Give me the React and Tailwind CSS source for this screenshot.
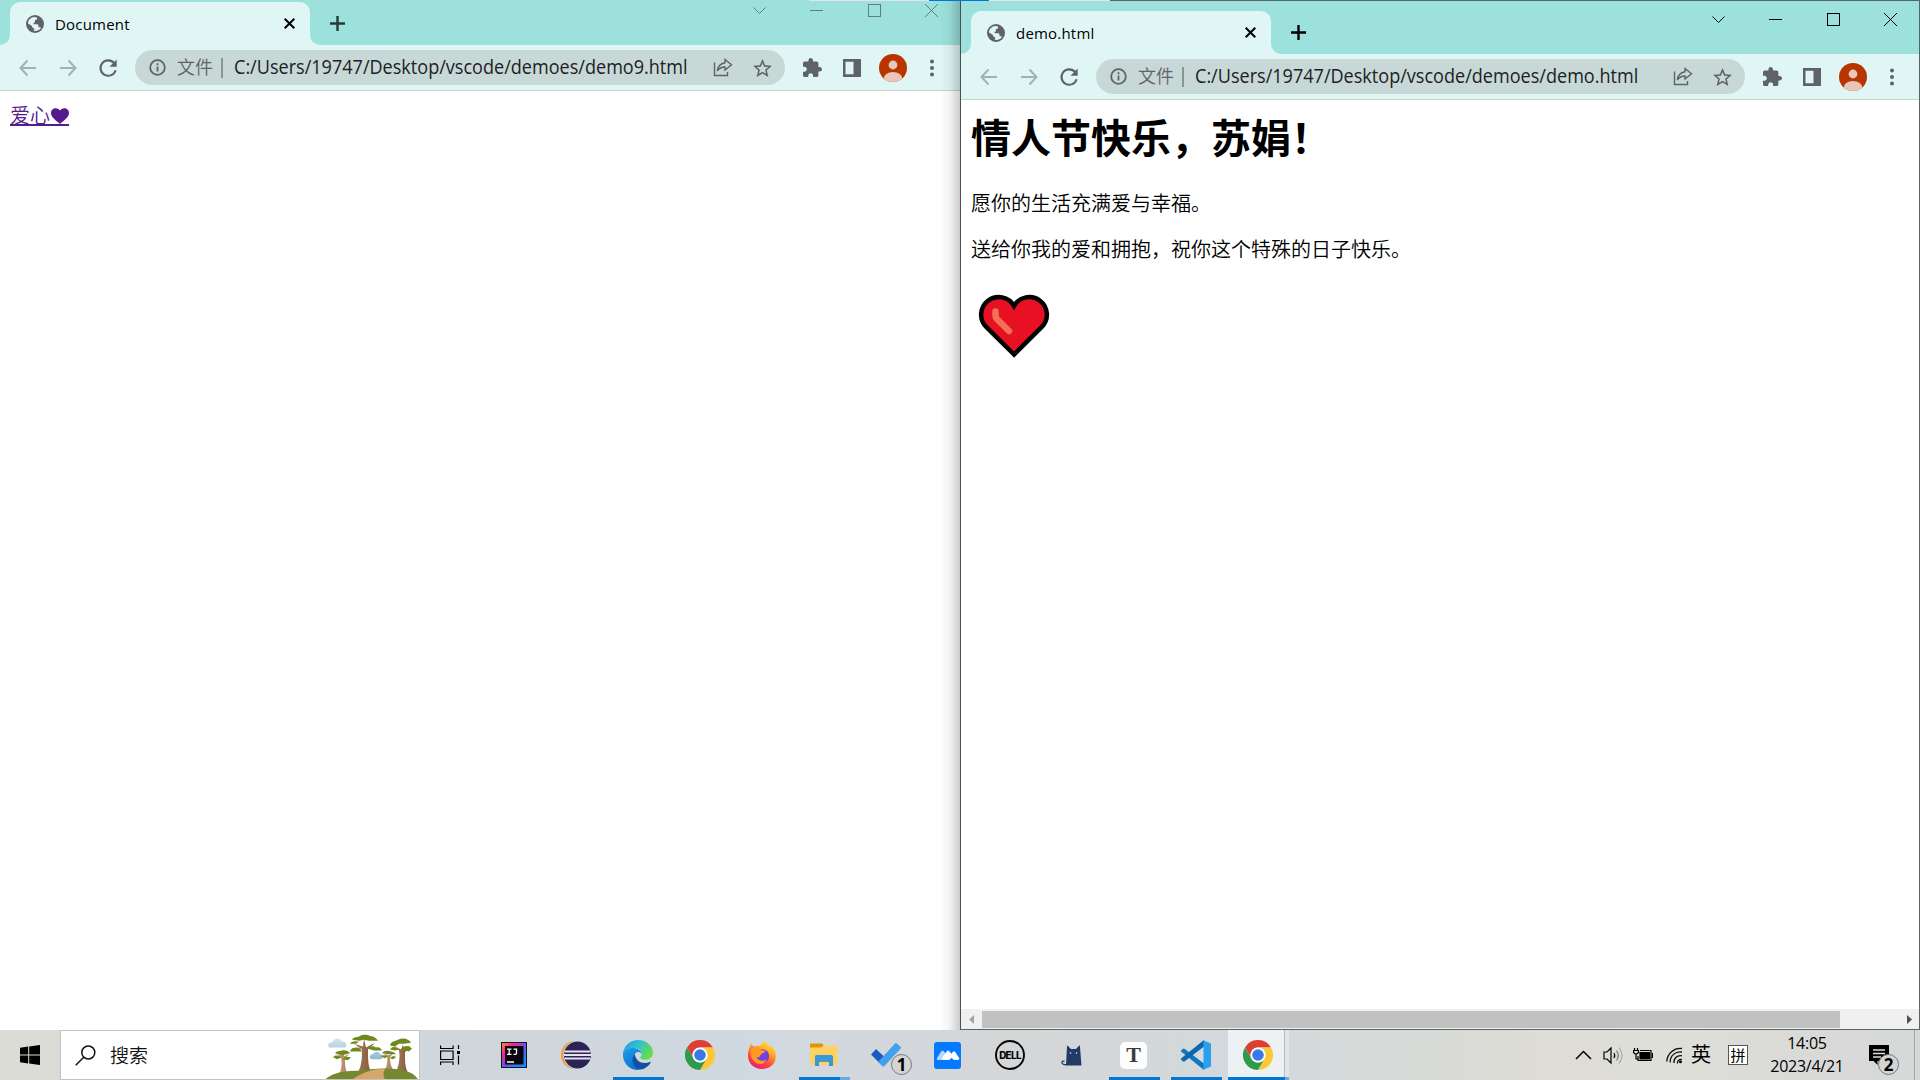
import React from "react";

const UI = "font-['Open_Sans','Noto_Sans_CJK_SC',sans-serif]";

function Globe() {
  return (
    <svg width="18" height="18" viewBox="0 0 18 18">
      <circle cx="9" cy="9" r="9" fill="#5f6368" />
      <path fill="#e0f6f5" d="M2 8.500C2 5 5 2.300 8.200 2.100L11 2.400c.4 1.600-.4 2.600-2.100 2.700v1.700c0 .700-.5 1-1.300 1v1.400H11c1 0 1.500.600 1.500 1.600v1.400h1.200c.700 0 1.200.400 1.400.9C13.600 15 11.500 16 9 16c-.8 0-1.500-.1-2.200-.3 1.300-.4 1.700-1.200 1.500-2.200-1.700-.3-2.300-1.200-2.300-2.500z" />
      <path fill="#5f6368" d="M2 8.700l4.200 3.600c.1 1.300.7 1.600 1.600 1.700v2.300C4.300 15.500 1.700 12.500 2 8.700z" />
    </svg>
  );
}

function Arrow({ flip }) {
  return (
    <svg width="20" height="20" viewBox="0 0 20 20" fill="none" stroke="#a3b2b1" strokeWidth="2" className={flip ? "rotate-180" : ""}>
      <path d="M18 10H3M9.500 2.500 2.500 10l7 7.500" />
    </svg>
  );
}

function Reload() {
  return (
    <svg width="20" height="20" viewBox="0 0 20 20" fill="none">
      <path d="M16.200 5.200A7.700 7.700 0 1 0 17.600 12.200" stroke="#5f6368" strokeWidth="2.100" />
      <path d="M18.700 1.600v7.200h-7.200z" fill="#5f6368" />
    </svg>
  );
}

function Chrome({ title, url, active }) {
  const ink = active ? "#000" : "#5a7f7c";
  return (
    <>
      <div className={`flex shrink-0 items-start bg-[#9de1dc] ${active ? "h-[53px] pt-[10px]" : "h-[45px] pt-[2px]"}`}>
        <div className="relative ml-[10px] flex h-[43px] w-[300px] items-center rounded-t-[10px] bg-[#e0f6f5] pl-[16px] pr-[14px]">
          <Globe />
          <span className={`${UI} ml-[11px] flex-1 text-[15px] leading-[20px] tracking-[0.2px] text-black`}>{title}</span>
          <svg width="13" height="13" viewBox="0 0 13 13" stroke="#000" strokeWidth="2"><path d="M1.700 1.700l9.600 9.600M11.300 1.700 1.700 11.300" /></svg>
          <svg className="absolute -left-[10px] bottom-0" width="10" height="10" fill="#e0f6f5"><path d="M10 0v10H0A10 10 0 0 0 10 0z" /></svg>
          <svg className="absolute -right-[10px] bottom-0" width="10" height="10" fill="#e0f6f5"><path d="M0 0v10h10A10 10 0 0 1 0 0z" /></svg>
        </div>
        <svg className="ml-[19px] mt-[13px]" width="17" height="17" stroke={active ? "#000" : "#233a38"} strokeWidth="2.400"><path d="M8.500 1v15M1 8.500h15" /></svg>
        <div className="ml-auto flex w-[229px] shrink-0">
          {[0, 1, 2, 3].map((i) => (
            <div key={i} className="flex h-[17px] w-[57.25px] items-center justify-center">
              <svg width="15" height="15" viewBox="0 0 15 15" fill="none" stroke={ink} strokeWidth="1">
                {i === 0 && <path d="M1.500 4.500l6 6 6-6" />}
                {i === 1 && <path d="M1 7.500h13" shapeRendering="crispEdges" />}
                {i === 2 && <path d="M1.500 1.500h12v12h-12z" shapeRendering="crispEdges" />}
                {i === 3 && <path d="M1 1l13 13M14 1 1 14" />}
              </svg>
            </div>
          ))}
        </div>
      </div>
      <div className={`flex h-[46px] shrink-0 items-center border-b border-[#c4d5d4] bg-[#e0f6f5] pl-[18px] ${active ? "pr-[24px]" : "pr-[25px]"}`}>
        <Arrow />
        <div className="ml-[20px] flex"><Arrow flip /></div>
        <div className="ml-[20px] flex"><Reload /></div>
        <div className="ml-[17px] flex h-[35px] min-w-0 flex-1 items-center rounded-full bg-[#c7d8d7] pl-[14px] pr-[13px]">
          <svg width="17" height="17" viewBox="0 0 17 17" fill="none" stroke="#5f6368" strokeWidth="1.800"><circle cx="8.500" cy="8.500" r="7.300" /><path d="M8.500 7.400v5M8.500 4.300v1.900" /></svg>
          <span className={`${UI} -mt-[2px] ml-[11px] text-[18px] font-[350] leading-[24px] text-[#5f6368]`}>文件</span>
          <span className="ml-[8px] mr-[11px] h-[20px] w-[2px] bg-[#8a9695]" />
          <span className="-mt-[2px] min-w-0 flex-1">
            <span className={`${UI} block w-max origin-left scale-x-[0.903] text-[20px] leading-[24px] text-[#202124]`}>{url}</span>
          </span>
          <svg width="20" height="19" viewBox="0 0 20 19" fill="none" stroke="#5f6368" strokeWidth="1.400"><path d="M1.500 4.500v13h13v-3.500" /><path d="M12 1.500l6.500 5.300-6.500 5.200V9c-3.600 0-6 1.400-7.600 4C4.800 8.500 7.500 5.500 12 4.700z" /></svg>
          <svg className="ml-[20px]" width="19" height="18" viewBox="2 2 20 19" fill="#5f6368"><path d="M22 9.240l-7.190-.620L12 2 9.190 8.630 2 9.240l5.460 4.730L5.820 21 12 17.270 18.180 21l-1.630-7.030L22 9.240zM12 15.400l-3.760 2.270 1-4.280-3.320-2.880 4.380-.380L12 6.100l1.710 4.040 4.380.380-3.320 2.880 1 4.280L12 15.400z" /></svg>
        </div>
        <svg className="ml-[18px]" width="19" height="19" viewBox="2 1 21 21" fill="#5f6368"><path d="M20.500 11H19V7c0-1.100-.900-2-2-2h-4V3.500C13 2.120 11.880 1 10.500 1S8 2.120 8 3.500V5H4c-1.100 0-1.990.900-1.990 2v3.800H3.500c1.490 0 2.700 1.210 2.700 2.700s-1.210 2.700-2.700 2.700H2V20c0 1.100.900 2 2 2h3.800v-1.500c0-1.490 1.210-2.700 2.700-2.700 1.490 0 2.700 1.210 2.700 2.700V22H17c1.100 0 2-.900 2-2v-4h1.500c1.380 0 2.500-1.120 2.500-2.500S21.880 11 20.500 11z" /></svg>
        <svg className="ml-[21px]" width="18" height="18"><path fill="#5f6368" fillRule="evenodd" d="M0 0h18v18H0zM2.500 2.800v12.400h8V2.800z" /></svg>
        <svg className="ml-[18px]" width="28" height="28" viewBox="0 0 28 28">
          <clipPath id={`avatar-${title}`}><circle cx="14" cy="14" r="14" /></clipPath>
          <g clipPath={`url(#avatar-${title})`}><path fill="#b93500" d="M0 0h28v28H0z" /><circle cx="14" cy="11" r="4.400" fill="#eac5ba" /><ellipse cx="14" cy="25" rx="9.500" ry="7" fill="#eac5ba" /></g>
        </svg>
        <svg className="ml-[22px]" width="6" height="18" fill="#5f6368"><circle cx="3" cy="2.500" r="2" /><circle cx="3" cy="9" r="2" /><circle cx="3" cy="15.500" r="2" /></svg>
      </div>
    </>
  );
}

function ChromeLogo() {
  return (
    <svg width="30" height="30" viewBox="0 0 48 48">
      <path d="M3.200 12 A24 24 0 0 1 44.800 12 H24 A12 12 0 0 0 13.600 30z" fill="#dd4033" />
      <path d="M44.800 12A24 24 0 0 1 24 48L34.400 30A12 12 0 0 0 24 12z" fill="#fcc934" />
      <path d="M24 48A24 24 0 0 1 3.200 12L13.600 30A12 12 0 0 0 34.400 30z" fill="#2f9a4e" />
      <circle cx="24" cy="24" r="12" fill="#fff" /><circle cx="24" cy="24" r="9.300" fill="#3b79e8" />
    </svg>
  );
}

const icons = {
  idea: (
    <svg width="26" height="26" viewBox="0 0 26 26">
      <defs><linearGradient id="ij" x1="0" y1="0" x2="1" y2="1"><stop offset="0" stopColor="#fc8a2e" /><stop offset=".25" stopColor="#f0288c" /><stop offset=".5" stopColor="#7a4be0" /><stop offset=".75" stopColor="#1b87f8" /></linearGradient></defs>
      <path fill="#111122" d="M0 0h26v26H0z" /><path fill="url(#ij)" d="M1 1h24v24H1z" /><path fill="#0d0210" d="M4 4h18.500v18.500H4z" />
      <path d="M6 7.200h4.500M8.200 7v5.500M6 12.300h4.500M12.500 7.200h3v4c0 1-.700 1.400-3 1.200M6 20h7" stroke="#fff" strokeWidth="1.300" fill="none" />
    </svg>
  ),
  eclipse: (
    <svg width="30" height="30" viewBox="0 0 30 30">
      <ellipse cx="13" cy="15" rx="13" ry="13.700" fill="#f39a36" /><circle cx="16.500" cy="15" r="14.300" fill="#d4dade" /><circle cx="16.500" cy="15" r="13.500" fill="#2c2255" />
      <path d="M3.500 11.500h26M3 15h27M3.500 18.500h26" stroke="#e6e3f0" strokeWidth="1.800" />
    </svg>
  ),
  edge: (
    <svg width="30" height="30" viewBox="0 0 30 30">
      <defs>
        <linearGradient id="edgeTop" x1="0" y1="0" x2="1" y2=".4"><stop offset="0" stopColor="#2297dc" /><stop offset=".5" stopColor="#2fc0d8" /><stop offset="1" stopColor="#62dd4e" /></linearGradient>
        <linearGradient id="edgeLow" x1="0" y1="0" x2=".6" y2="1"><stop offset="0" stopColor="#1c9fe8" /><stop offset="1" stopColor="#0a70d2" /></linearGradient>
      </defs>
      <path fill="url(#edgeTop)" d="M0 13C1.500 5 7.500 0 15 0c9 0 15 6.200 15 12.500 0 4.500-3.400 7.300-8 7.300-3.300 0-5-1.100-4.700-2.200.400-1 1.300-1.500 1.300-3.400C18.600 10 14 8 10 8 5.500 8 1.500 10 0 13z" />
      <path fill="url(#edgeLow)" d="M0 13c1.500-3.400 5.500-5 9.500-5 5 0 8.500 2.600 9 5.500-1.600-2-5-2.300-6.700.500-3.800 6 1 14 8 13.300A15 15 0 0 1 15 30C6 30-.800 22.500 0 13z" />
      <path fill="#10529d" d="M11.800 14C7 19 10.500 29.500 18 29.600c4.300-.900 7.800-3.600 9.800-7.200.200-.600-.300-.800-.800-.500C20 25 12.500 21.500 11.800 14z" />
    </svg>
  ),
  firefox: (
    <svg width="30" height="30" viewBox="0 0 30 30">
      <defs><linearGradient id="ff" x1=".8" y1="0" x2=".3" y2="1"><stop offset="0" stopColor="#ffe83c" /><stop offset=".35" stopColor="#ffac25" /><stop offset=".65" stopColor="#ff5234" /><stop offset="1" stopColor="#ea1878" /></linearGradient></defs>
      <path fill="url(#ff)" d="M4 3.500c1 1.500 2 2.500 3.500 3 1.500-.700 3-.800 4-.600C14 5.500 15 3 18.500.500c.500 3.500 3 4.500 5 7 .300-.700.200-1.500 0-2.500 4.500 4 6 9 5 14-1.300 6.200-7 10-13.500 10C7 29 1 23.500 1 15.500 1 11 2.500 7 4 3.500z" />
      <circle cx="15.500" cy="16" r="6.700" fill="#7540dc" /><path fill="#ff9a22" d="M3.500 10c3-4 8-4 10 0l5 .7c-.5 2-4 2.600-5 4-.5 2.300-2 3-4 2.500 2 4 7 4.500 10 2-1 4-6 6-10 4C5 21 3 16 3.500 10z" />
    </svg>
  ),
  explorer: (
    <svg width="28" height="24" viewBox="0 0 28 24">
      <path fill="#dc9708" d="M0 1.500Q0 .500 1 .500h11l1.500 1.500V6H0z" /><path fill="#fdd164" d="M0 4.500h11l2.500-2H27q.500 0 .500.500v19H0z" />
      <path fill="#3699db" d="M5 23V13.500q0-1.500 1.500-1.500H21q2 0 2 1.500V23h-4v-5.500H9V23z" /><path fill="#1b79c0" d="M9 17.500h10v1.200H9z" />
    </svg>
  ),
  todo: (
    <svg width="30" height="26" viewBox="0 0 30 26">
      <path fill="#1b5abe" d="M0 12.500 5 7l8.500 8-5.500 5.500z" /><path fill="#40a2ec" d="M7 20 24 1.500q1-1 2 0l3.500 3.300q1 1 0 2L13.500 24q-1.200 1-2.300 0z" />
    </svg>
  ),
  meeting: (
    <svg className="mr-px" width="27" height="27" viewBox="0 0 27 27"><rect width="27" height="27" rx="3" fill="#067aff" /><path fill="#b9d8ff" d="M3 16 7.500 9q1-1.200 2 0l3.500 4-3 5H4.500q-2.500 0-1.500-2z" /><path fill="#fff" d="M8.500 15.500 13 9q1-1.200 2 0l2.500 2.700L19 9.800q1-1 2 0l4 6q1 2.200-1.500 2.200H21q-1.500 0-2.300-1l-1-1.200-1.500 1.500q-.7.700-2 .7H10q-2.500 0-1.500-2.500z" /></svg>
  ),
  dell: (
    <svg width="30" height="30" viewBox="0 0 30 30"><circle cx="15" cy="15" r="14" fill="none" stroke="#050505" strokeWidth="1.900" /><text x="15" y="18.700" fontFamily="Inter" fontWeight="800" fontSize="9.800" letterSpacing="-.6" textAnchor="middle" fill="#050505">DELL</text></svg>
  ),
  cat: (
    <svg className="mr-[2px]" width="21" height="21" viewBox="0 0 21 21" fill="#1f3b66"><path d="M6 1q.500-.600 1 0l3 3h5l3-3.300q.700-.500.900.300L20.500 20.500H5z" /><path d="M6.500 19.500c-3.500.600-6-.500-5.500-2.700.300-1 2-.900 2.500-.300" fill="none" stroke="#1f3b66" strokeWidth="1.200" /><circle cx="9.500" cy="8" r=".8" fill="#dfe8f5" /><circle cx="15.500" cy="8" r=".8" fill="#dfe8f5" /></svg>
  ),
  typora: (
    <div className="mr-px flex size-[27px] items-center justify-center rounded-[5px] bg-[#fdfdfd] font-['Liberation_Serif',serif] text-[22px] font-bold leading-none text-[#3a3a3a]">T</div>
  ),
  vscode: (
    <svg width="30" height="30" viewBox="0 0 30 30"><path fill="#0f78c0" d="M0 10.500 2 8.700q.700-.400 1.400 0L23 23.500V30L.3 11.800Q-.3 11 0 10.500z" /><path fill="#0a69ad" d="m0 19.500 2 1.900q.700.400 1.400 0L23 6.500V0L.3 18.200q-.6.700-.3 1.300z" /><path fill="#27a0ee" d="M21.500 0 30 3.500v23L21.500 30q1-.500 1-2V2q0-1.500-1-2z" /></svg>
  ),
};

function Task({ children, bar }) {
  return (
    <div className="relative flex h-[50px] w-[62px] items-center justify-center">
      {children}
      {bar && <span className="absolute bottom-0 left-[6px] h-[3px] w-[51px] bg-[#0078d7]" />}
    </div>
  );
}

function Trees() {
  return (
    <svg width="94" height="45.500" viewBox="0 0 94 47" preserveAspectRatio="none">
      <defs><linearGradient id="trunk"><stop offset="0" stopColor="#c59d78" /><stop offset="1" stopColor="#805537" /></linearGradient><linearGradient id="sky" x1="0" y1="0" x2="0" y2="1"><stop offset="0" stopColor="#d4e5ef" /><stop offset="1" stopColor="#8eb9d2" /></linearGradient></defs>
      <path fill="url(#sky)" d="M4 14c-2-4 1-6 3-5 1-5 8-6 10-1 4-1 6 4 3 6zM46 26c-3-3 0-5 2-5 1-3 6-4 7 0 4 0 4 4 1 5z" />
      <path fill="url(#trunk)" d="M33 39c4-6 4-17 4-23l-8-6 9 3 1-8 2 9 9-5-7 7c0 9 0 17 3 23zM14 42c3-5 3-14 2-18l-5-3 6 1 2-2v3l5-2-4 4c0 6 0 11 3 17z" />
      <path fill="url(#trunk)" d="M70 41c5-10 5-19 4-24l-6-5 8 4 2-5 1 5 6-4-5 7c0 10 0 17 4 22zM60 37c2-5 3-10 2-14l-4-3 6 2 4-2-3 4c0 6 1 9 3 13z" />
      <path fill="#6f8a1c" d="M27 6c2-4 5-2 8-4 4-2 8-1 10 0 4 0 7 3 8 5l-9 0-5-1-5 1zM25 10c2-3 5-3 9-2l-3 2zM25 18c1-3 3-4 7-4 3 0 4 2 5 4l-6 0zM42 15c4-3 6-3 9-1 3-1 5 1 6 3l-8 0zM10 20c2-3 4-2 7-3 4-1 7 1 8 3l-8 2zM8 24c2-3 5-2 9 0l-5 2zM18 26c2-3 4-3 8-2l-3 3zM65 12c1-5 5-4 8-6 5-3 11-1 13 3l-7 1-5 0-4 3zM65 16c2-4 6-3 9 0l-4 1zM76 16c3-5 8-4 11-1l-3 3zM57 20c2-3 6-3 9-2 2 0 4 1 5 3l-7 0zM56 23c3-2 5-1 7 0l-3 2zM65 25c2-3 5-2 6-1l-3 2z" />
      <path fill="#76882f" d="M0 47c9-8 21-9 35-9 10-2 50-7 58 9z" /><path fill="#d7a66a" d="M27 47c9-5 17-11 33-11-2 4-2 7 0 11z" />
    </svg>
  );
}

function Badge({ n, cls }) {
  return <span className={`absolute flex size-[21px] items-center justify-center rounded-full border border-[#777] bg-[#d3d5d5] font-['Open_Sans',sans-serif] text-[17px] font-bold leading-none text-black ${cls}`}>{n}</span>;
}

function Taskbar() {
  return (
    <div className="flex h-[50px] w-full shrink-0 bg-[linear-gradient(90deg,#dbdcd4_0px,#d5d9da_300px,#ced6dc_480px,#d1d9e0_750px,#d5d6d8_1010px,#d2d9dc_1250px,#dddcd5_1540px,#dedfd8_1660px,#d6d7d8_1920px)]">
      <div className="flex w-[60px] items-center justify-center">
        <svg width="20" height="20" viewBox="0 0 20 20"><path d="M0 2.700 8.200 1.600v7.900H0zM9.200 1.400 20 0v9.500H9.200zM0 10.500h8.200v7.900L0 17.300zM9.200 10.500H20V20L9.200 18.500z" /></svg>
      </div>
      <div className="flex w-[360px] items-center border border-[#c2c2c2] bg-white pl-[14px]">
        <svg width="21" height="21" viewBox="0 0 21 21" fill="none" stroke="#111" strokeWidth="1.500"><circle cx="13.300" cy="7.500" r="6.500" /><path d="M8.700 12.300.700 20.300" /></svg>
        <span className={`${UI} ml-[14px] mt-px text-[19px] font-[350] leading-[26px] text-[#111]`}>搜索</span>
        <div className="ml-auto flex self-end"><Trees /></div>
      </div>
      <div className="flex w-[63px] items-center pl-[20px]">
        <svg width="21" height="20" viewBox="0 0 21 20" fill="none" stroke="#000" strokeWidth="1.200"><path d="M.600.500v3h12.500v-3M.600 6h12.500v8.500H.600zM.600 20v-3h12.500v3M18.500 0v4M18.500 10.500v9" /><path d="M17 6h3v3h-3z" fill="#000" stroke="none" /></svg>
      </div>
      <Task>{icons.idea}</Task>
      <Task>{icons.eclipse}</Task>
      <Task bar>{icons.edge}</Task>
      <Task><ChromeLogo /></Task>
      <Task>{icons.firefox}</Task>
      <div className="relative flex h-[50px] w-[62px] items-center justify-center">
        {icons.explorer}
        <span className="absolute bottom-0 left-[6px] flex h-[3px] w-[51px] bg-[#66abe5]"><span className="w-[41px] bg-[#0078d7]" /></span>
      </div>
      <Task>{icons.todo}<Badge n="1" cls="left-[36px] top-[24px]" /></Task>
      <Task>{icons.meeting}</Task>
      <Task>{icons.dell}</Task>
      <Task>{icons.cat}</Task>
      <Task bar>{icons.typora}</Task>
      <Task bar>{icons.vscode}</Task>
      <div className="relative flex h-[50px] w-[62px]">
        <div className="ml-px flex w-[57px] items-center justify-center border-r border-[#b5bec3] bg-[#edf1f3] pl-[3px]"><ChromeLogo /></div>
        <div className="w-[4px] bg-[#e0e5e7]" />
        <span className="absolute bottom-0 left-px flex h-[3px] w-[61px] bg-[#66abe5]"><span className="w-[57px] bg-[#0078d7]" /></span>
      </div>
      <div className="ml-auto flex items-center">
        <svg width="17" height="10" fill="none" stroke="#000" strokeWidth="1.500"><path d="M1 9l7.500-7.500L16 9" /></svg>
        <svg className="ml-[11px]" width="21" height="19" viewBox="0 0 21 19" fill="none" stroke="#000" strokeWidth="1.200"><path d="M1 6h3l4-4v15l-4-4H1z" /><path d="M11 7q1.500 2.500 0 5" /><path d="M13.500 4.500q3.500 5 0 10" stroke="#777" /><path d="M16 1.500q6 8 0 16" stroke="#aaa" /></svg>
        <svg className="ml-[9px]" width="20" height="14" viewBox="0 0 20 14" fill="none" stroke="#000" strokeWidth="1.200"><path d="M1.500 0v2M4.500 0v2M0.500 2.500h5v2q-2.500 3-5 0zM3 6v5h2" /><path d="M7 2.500h11v10H5V8M19.500 5v5" /><path d="M7 4.500h9.500v6.500H7z" fill="#000" /></svg>
        <svg className="ml-[13px]" width="17" height="17" viewBox="0 0 17 17" fill="none" stroke="#111" strokeWidth="1.300"><path d="M.800 14.500A13.500 13.500 0 0 1 16 1.500M4.200 15.500A10 10 0 0 1 16 5M8 16a6.500 6.500 0 0 1 8-7.200M11.500 16.500a3.500 3.500 0 0 1 4.500-4" /><circle cx="14.500" cy="14.800" r="1.500" fill="#000" stroke="none" /></svg>
        <span className={`${UI} ml-[8px] text-[20px] leading-[26px] text-black`}>英</span>
        <span className={`${UI} ml-[17px] flex size-[20px] items-center justify-center border border-[#555] bg-white text-[15px] leading-none text-black`}>拼</span>
        <div className={`${UI} ml-[18px] w-[82px] whitespace-nowrap text-center text-[16px] leading-[23px] tracking-[-0.25px] text-black`}>
          <div>14:05</div><div>2023/4/21</div>
        </div>
        <div className="relative ml-[21px] h-[50px] w-[45px]">
          <svg className="mt-[15px]" width="20" height="20"><path d="M0 0h20v16H8.500v4L4.500 16H0z" /><path d="M4 5h12M4 8.500h12M4 12h8" stroke="#dcdcdc" strokeWidth="1.400" /></svg>
          <Badge n="2" cls="left-[9px] top-[24px]" />
        </div>
        <div className="h-[50px] w-[6px] border-l border-[#a3a5a5]" />
      </div>
    </div>
  );
}

export default function App() {
  return (
    <div className="flex h-[1080px] w-[1920px] flex-col overflow-hidden bg-white">
      <div className="relative flex h-[1030px]">
        <section className="relative flex w-[960px] flex-col bg-white">
          <Chrome title="Document" url="C:/Users/19747/Desktop/vscode/demoes/demo9.html" />
          <main className="px-[10px] pt-[17px]">
            <a className={`${UI} flex w-fit items-center border-b-2 border-[#551a8b] text-[20px] font-[350] leading-[16px] text-[#551a8b]`}>
              爱心
              <svg className="ml-[1px]" width="18" height="16" viewBox="0 0 18 16" fill="#551a8b"><path d="M9 16C6 13 0 9.500 0 5 0 0 6-1.500 9 2.500 12-1.500 18 0 18 5c0 4.500-6 8-9 11z" /></svg>
            </a>
          </main>
          <div className="pointer-events-none absolute inset-y-0 right-0 w-[20px] bg-[linear-gradient(90deg,transparent,rgba(0,0,0,0.05)_50%,rgba(0,0,0,0.2))]" />
        </section>
        <section className="flex w-[960px] flex-col border border-[#566665] border-l-[#4a4f4f] bg-white">
          <Chrome active title="demo.html" url="C:/Users/19747/Desktop/vscode/demoes/demo.html" />
          <main className={`${UI} flex-1 px-[10px] text-black`}>
            <h1 className="mt-[10px] text-[40px] font-bold leading-[56px]">情人节快乐，苏娟！</h1>
            <p className="mt-[25px] text-[20px] font-[350] leading-[26px]">愿你的生活充满爱与幸福。</p>
            <p className="mt-[20px] text-[20px] font-[350] leading-[26px]">送给你我的爱和拥抱，祝你这个特殊的日子快乐。</p>
            <svg className="ml-[7px] mt-[30px]" width="72" height="68" viewBox="0 0 72 68">
              <path d="M36 61.500 8.400 34.200A17.600 17.600 0 1 1 36 12.900 17.600 17.600 0 1 1 63.600 34.200z" fill="#e81123" stroke="#000" strokeWidth="4.500" />
              <path d="M17.500 18.500v4q0 2 1.500 3.500L31 38" fill="none" stroke="#f36f55" strokeWidth="6.500" strokeLinecap="round" />
            </svg>
          </main>
          <div className="flex h-[20px] items-center bg-[#f0f0f0] pt-px">
            <svg className="ml-[8px] mr-[8px]" width="5" height="9" fill="#a3a3a3"><path d="M5 0v9L0 4.500z" /></svg>
            <div className="h-[17px] w-[858px] bg-[#c1c1c1]" />
            <svg className="ml-[67px]" width="5" height="9" fill="#505050"><path d="M0 0v9l5-4.500z" /></svg>
          </div>
        </section>
        <div className="absolute left-[809px] top-0 flex h-px w-[301px] bg-[#e5e5e5]"><span className="ml-[120px] w-[60px] bg-[#0078d7]" /></div>
      </div>
      <Taskbar />
    </div>
  );
}
